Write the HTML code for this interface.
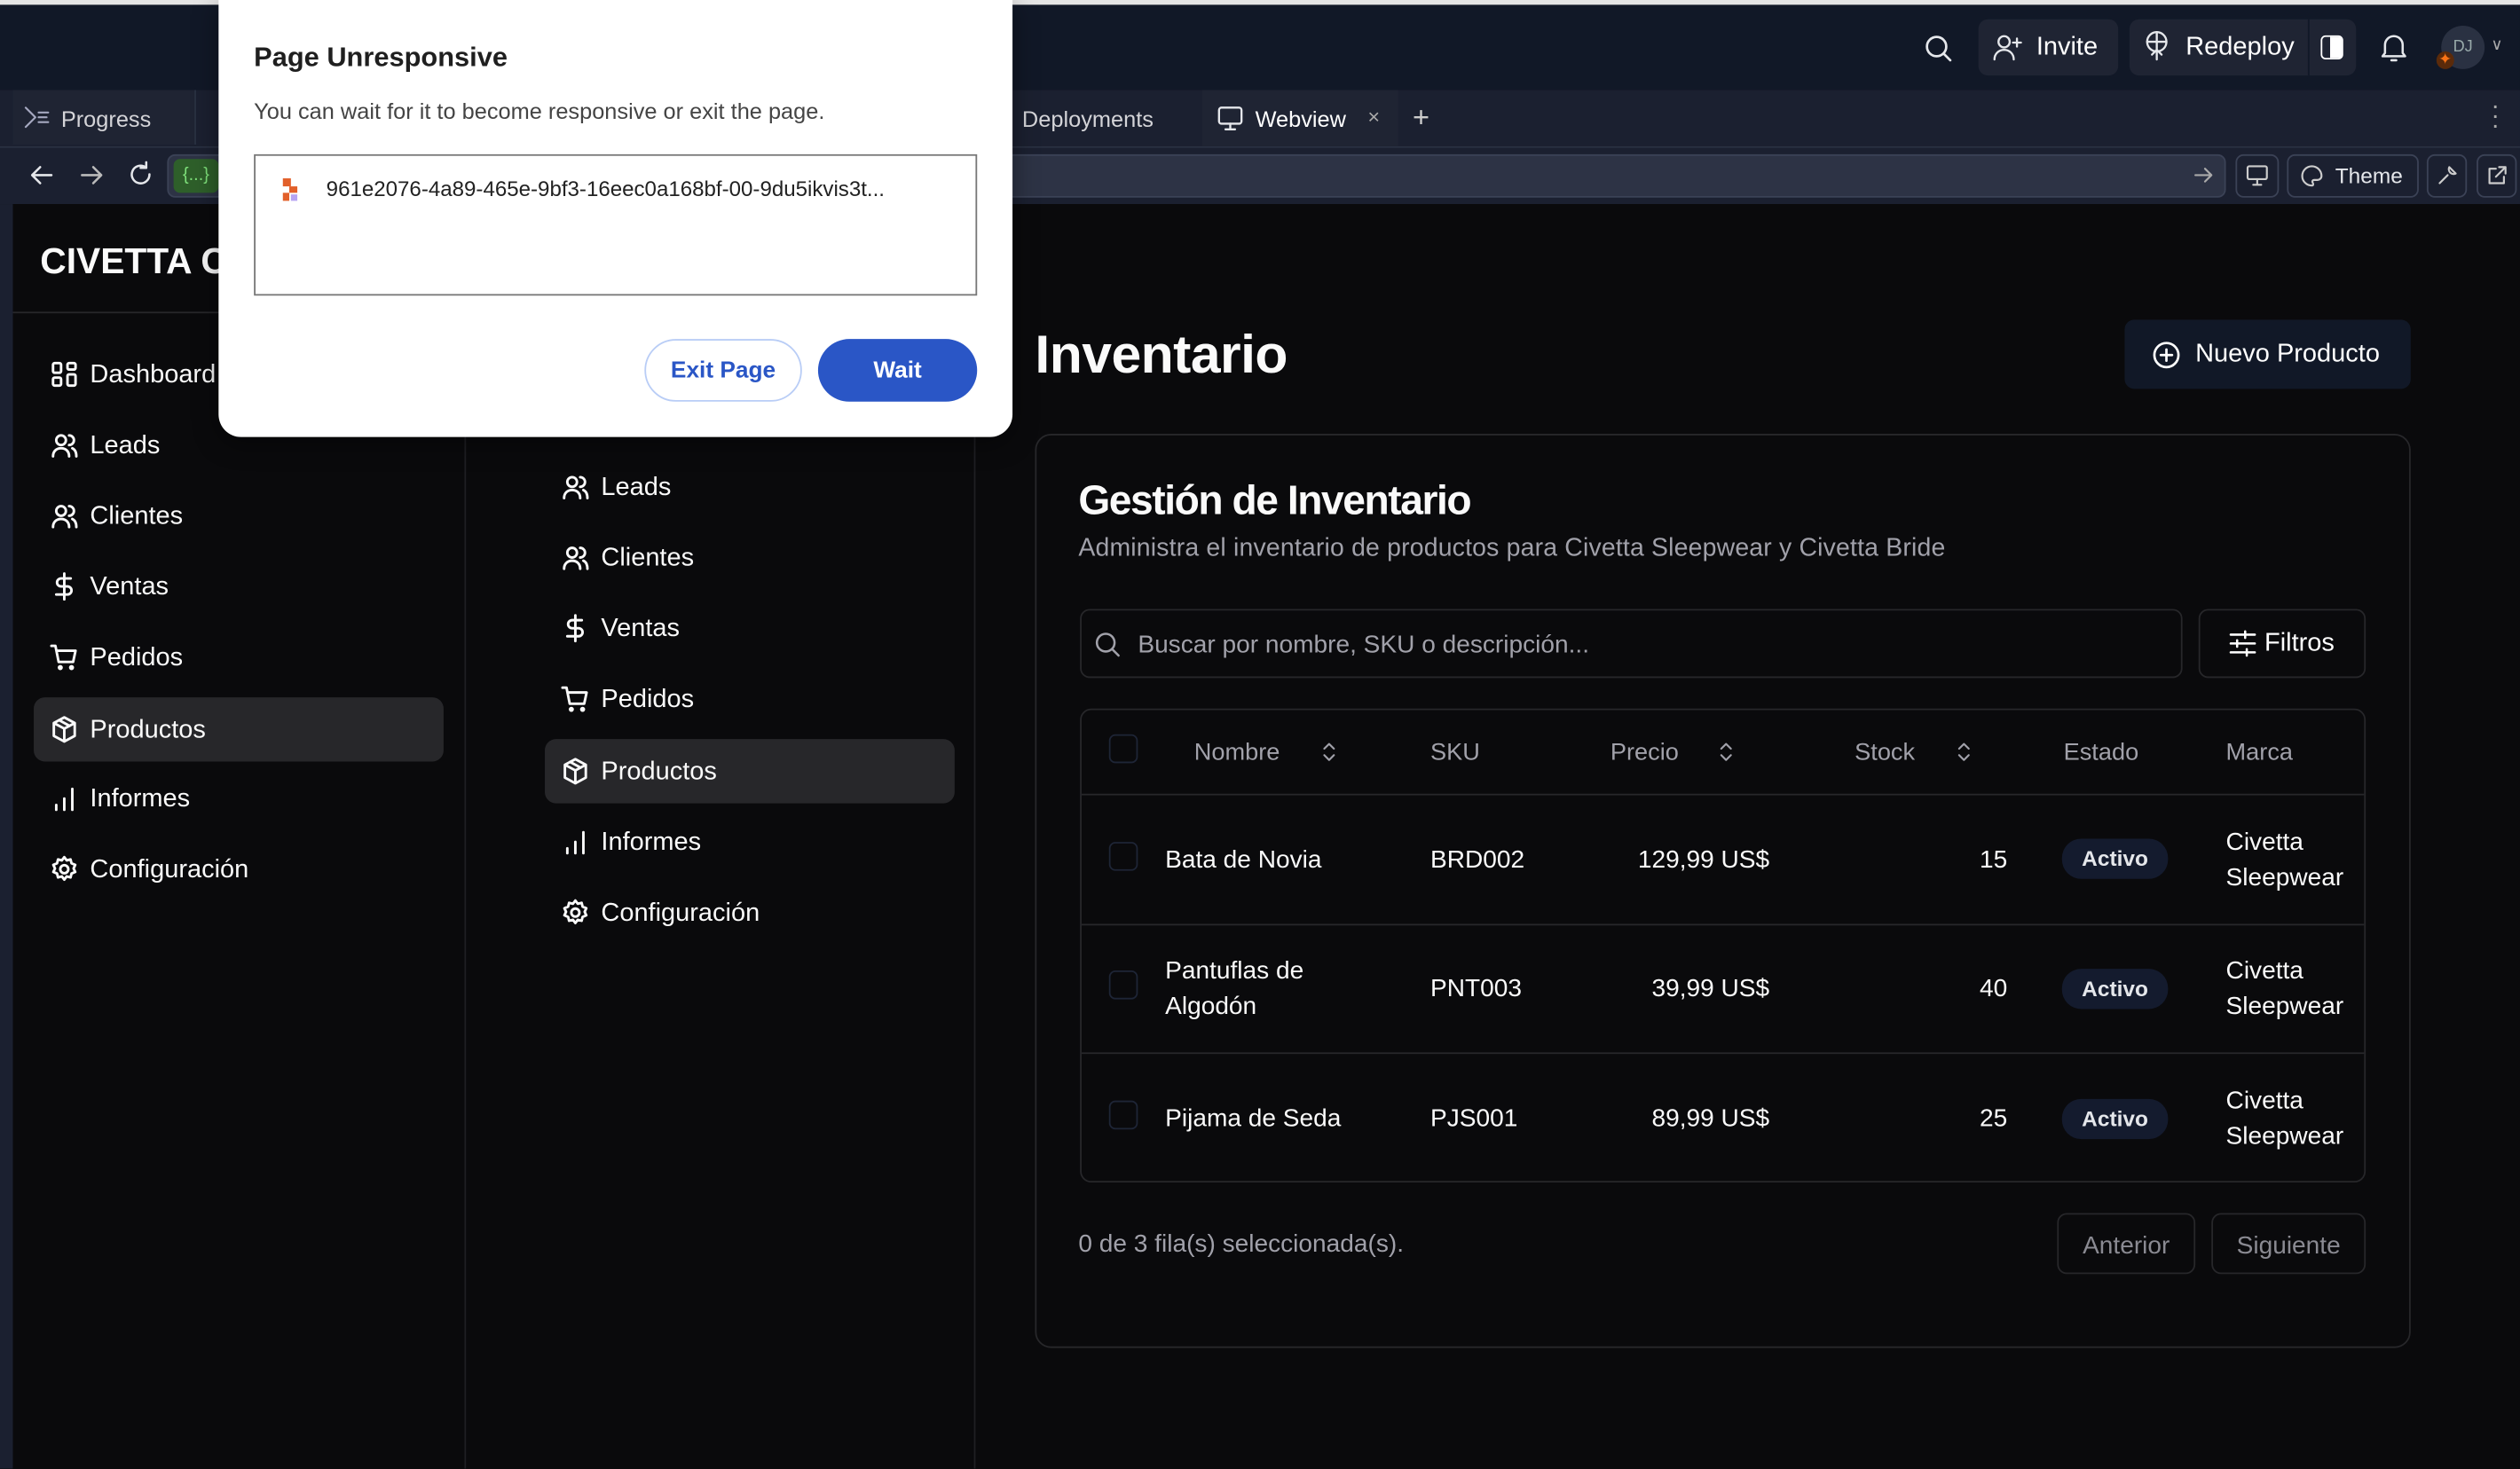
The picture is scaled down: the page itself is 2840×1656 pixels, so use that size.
<!DOCTYPE html>
<html><head><meta charset="utf-8">
<style>
*{box-sizing:border-box;margin:0;padding:0}
html,body{width:2840px;height:1656px;overflow:hidden;background:#0a0a0c}
#s{position:absolute;left:0;top:0;width:1568px;height:914.3px;transform:scale(1.81122);transform-origin:0 0;font-family:"Liberation Sans",sans-serif;color:#fafafa;background:#0a0a0c;overflow:hidden}
.a{position:absolute}
svg{position:absolute;fill:none;stroke:currentColor;stroke-width:1.6;stroke-linecap:round;stroke-linejoin:round}
.nav{position:absolute;font-size:16px;color:#fafafa;height:40px;line-height:42px;padding-left:35px;border-radius:7px}
.nav svg{left:10px;top:11px;width:18px;height:18px}
.act{background:#27272a}
.th{position:absolute;font-size:15px;color:#a1a1aa;top:460px}
.td{position:absolute;font-size:15.5px;color:#fafafa;line-height:22px;margin-top:1px}
.badge{position:absolute;background:#141b2e;border-radius:12px;font-size:13.5px;font-weight:bold;color:#e5e7eb;width:66px;height:25px;line-height:25px;text-align:center;left:1283px}
.cb{position:absolute;left:690px;width:18px;height:18px;border:1px solid #1e2536;border-radius:4px}
.sep{position:absolute;left:673px;width:798px;height:1px;background:#27272a}
</style></head><body><div id="s">
<div class="a" style="left:0;top:0;width:1568px;height:3px;background:#e5e5e5"></div>
<div class="a" style="left:0;top:3px;width:1568px;height:53px;background:#111827"></div>
<div class="a" style="left:0;top:56px;width:1568px;height:35px;background:#1b2030"></div>
<div class="a" style="left:0;top:91px;width:1568px;height:36px;background:#1b2030;border-top:1px solid #2a3142"></div>
<div class="a" style="left:0;top:127px;width:8px;height:790px;background:#1b2030"></div>
<div class="a" style="left:8px;top:56px;width:114px;height:34px;background:#1f2433;border-right:1px solid #2a3142"></div>
<div class="a" style="left:38px;top:66px;font-size:14px;color:#d4d4d8">Progress</div>
<svg style="left:15px;top:66px;width:16px;height:14px;stroke:#a5a8c0;stroke-width:1.2" viewBox="0 0 16 14"><path d="M1 1l6 6-6 6M9 4h6M9 7h5M9 10h6"/></svg>
<div class="a" style="left:636px;top:66px;font-size:14px;color:#d4d4d8">Deployments</div>
<div class="a" style="left:748px;top:56px;width:122px;height:35px;background:#1f2433"></div>
<svg style="left:757px;top:66px;width:17px;height:16px;stroke:#e5e7eb;stroke-width:1.3" viewBox="0 0 17 16"><rect x="1.5" y="1" width="14" height="10" rx="1.5"/><path d="M8.5 11v3M5.5 14.5h6"/></svg>
<div class="a" style="left:781px;top:66px;font-size:14px;color:#fff">Webview</div>
<div class="a" style="left:851px;top:65px;font-size:13px;color:#aaa">×</div>
<div class="a" style="left:879px;top:63px;font-size:18px;color:#ccc">+</div>
<div class="a" style="left:1550px;top:64px;font-size:16px;color:#aaa;line-height:6px">·<br>·<br>·</div>
<svg style="left:18px;top:102px;width:16px;height:14px;stroke:#e5e7eb;stroke-width:1.4" viewBox="0 0 16 14"><path d="M14 7H2M7 2L2 7l5 5"/></svg>
<svg style="left:49px;top:102px;width:16px;height:14px;stroke:#bbb;stroke-width:1.4" viewBox="0 0 16 14"><path d="M2 7h12M9 2l5 5-5 5"/></svg>
<svg style="left:79px;top:100px;width:17px;height:17px;stroke:#e5e7eb;stroke-width:1.4" viewBox="0 0 17 17"><path d="M14 8.5A5.5 5.5 0 1 1 11.5 4M12 1v3.5H8.5"/></svg>
<div class="a" style="left:104px;top:96px;width:1281px;height:27px;background:#2d3345;border:1px solid #3b4256;border-radius:5px"></div>
<div class="a" style="left:108px;top:99px;width:28px;height:21px;background:#2e5f2a;border-radius:4px;color:#7ee07a;font-size:11px;text-align:center;line-height:21px">{...}</div>
<svg style="left:1365px;top:103px;width:12px;height:12px;stroke:#aaa;stroke-width:1.2" viewBox="0 0 12 12"><path d="M1 6h10M7 2l4 4-4 4"/></svg>
<div class="a" style="left:1391px;top:96px;width:27px;height:27px;border:1px solid #3b4256;border-radius:5px"></div>
<svg style="left:1397px;top:102px;width:15px;height:15px;stroke:#ccc;stroke-width:1.2" viewBox="0 0 15 15"><rect x="1.5" y="1.5" width="12" height="8" rx="1"/><path d="M7.5 9.5v3M5 13h5"/></svg>
<div class="a" style="left:1423px;top:96px;width:82px;height:27px;border:1px solid #3b4256;border-radius:5px"></div>
<svg style="left:1431px;top:102px;width:15px;height:15px;stroke:#ccc;stroke-width:1.2" viewBox="0 0 15 15"><path d="M7.5 1.5a6 6 0 1 0 0 12c1 0 1-1 .5-1.8-.5-.8 0-1.7 1-1.7H11a2.5 2.5 0 0 0 2.5-2.5c0-3.3-2.7-6-6-6z"/></svg>
<div class="a" style="left:1453px;top:102px;font-size:13.5px;color:#e5e7eb">Theme</div>
<div class="a" style="left:1510px;top:96px;width:25px;height:27px;border:1px solid #3b4256;border-radius:5px"></div>
<div class="a" style="left:1541px;top:96px;width:25px;height:27px;border:1px solid #3b4256;border-radius:5px"></div>
<svg style="left:1516px;top:102px;width:14px;height:14px;stroke:#ccc;stroke-width:1.2" viewBox="0 0 14 14"><path d="M2 12l5-5M8 2a3 3 0 0 0 4 4l-2-2z"/></svg>
<svg style="left:1547px;top:102px;width:14px;height:14px;stroke:#ccc;stroke-width:1.2" viewBox="0 0 14 14"><path d="M11 8v4H2V3h4M8 2h4v4M12 2L6 8"/></svg>
<svg style="left:1197px;top:21px;width:18px;height:18px;stroke:#e5e7eb;stroke-width:1.5" viewBox="0 0 18 18"><circle cx="8" cy="8" r="6"/><path d="M12.5 12.5l4 4"/></svg>
<div class="a" style="left:1231px;top:12px;width:87px;height:35px;background:#1f2433;border-radius:6px"></div>
<svg style="left:1240px;top:21px;width:19px;height:17px;stroke:#e5e7eb;stroke-width:1.3" viewBox="0 0 19 17"><circle cx="7" cy="5" r="3.5"/><path d="M1 16c0-3.5 2.7-6 6-6s6 2.5 6 6M15 3v5M12.5 5.5h5"/></svg>
<div class="a" style="left:1267px;top:21px;font-size:16px;color:#fff">Invite</div>
<div class="a" style="left:1325px;top:12px;width:141px;height:35px;background:#1f2433;border-radius:6px"></div>
<div class="a" style="left:1436px;top:12px;width:1px;height:35px;background:#111827"></div>
<svg style="left:1333px;top:19px;width:18px;height:19px;stroke:#e5e7eb;stroke-width:1.3" viewBox="0 0 18 19"><circle cx="9" cy="7" r="6"/><path d="M3 7h12M9 1v17M6 15l3-3 3 3"/></svg>
<div class="a" style="left:1360px;top:21px;font-size:16px;color:#fff">Redeploy</div>
<div class="a" style="left:1444px;top:22px;width:14px;height:15px;border:1.5px solid #fff;border-radius:3px;background:linear-gradient(90deg,transparent 40%,#fff 40%)"></div>
<svg style="left:1481px;top:20px;width:17px;height:19px;stroke:#e5e7eb;stroke-width:1.4" viewBox="0 0 17 19"><path d="M3 13V8a5.5 5.5 0 0 1 11 0v5l1.5 2h-14zM7 17.5h3"/></svg>
<div class="a" style="left:1519px;top:16px;width:27px;height:27px;border-radius:50%;background:#2a3142;color:#9aa;font-size:10px;text-align:center;line-height:27px">DJ</div>
<div class="a" style="left:1516px;top:32px;width:11px;height:11px;border-radius:50%;background:#5a2a0a;color:#f97316;font-size:10px;line-height:11px;text-align:center">✦</div>
<div class="a" style="left:1550px;top:23px;font-size:10px;color:#aaa">∨</div>
<div class="a" style="left:8px;top:127px;width:282px;height:790px;background:#0a0a0c;border-right:1px solid #1f1f23"></div>
<div class="a" style="left:8px;top:194px;width:282px;height:1px;background:#27272a"></div>
<div class="a" style="left:25px;top:150px;font-size:22.5px;font-weight:bold">CIVETTA C</div>
<div class="a" style="left:290px;top:127px;width:317px;height:790px;border-right:1px solid #1f1f23"></div>
<div class="nav" style="left:21px;top:213px;width:255px"><svg viewBox="0 0 18 18"><rect x="2" y="2" width="5" height="6" rx="1"/><rect x="11" y="2" width="5" height="4" rx="1"/><rect x="11" y="9" width="5" height="7" rx="1"/><rect x="2" y="11" width="5" height="5" rx="1"/></svg>Dashboard</div>
<div class="nav" style="left:21px;top:257px;width:255px"><svg viewBox="0 0 18 18"><circle cx="7" cy="6" r="3"/><path d="M2 16c0-3 2-5 5-5s5 2 5 5M12 3a3 3 0 0 1 0 6M14 11c1.5.7 2.5 2.5 2.5 5"/></svg>Leads</div>
<div class="nav" style="left:21px;top:301px;width:255px"><svg viewBox="0 0 18 18"><circle cx="7" cy="6" r="3"/><path d="M2 16c0-3 2-5 5-5s5 2 5 5M12 3a3 3 0 0 1 0 6M14 11c1.5.7 2.5 2.5 2.5 5"/></svg>Clientes</div>
<div class="nav" style="left:21px;top:345px;width:255px"><svg viewBox="0 0 18 18"><path d="M9 1v16M13 4H7a2.5 2.5 0 0 0 0 5h4a2.5 2.5 0 0 1 0 5H4"/></svg>Ventas</div>
<div class="nav" style="left:21px;top:389px;width:255px"><svg viewBox="0 0 18 18"><path d="M1 2h2.5l2 10h9l1.5-7H4.5"/><circle cx="6.5" cy="15.5" r=".8"/><circle cx="13.5" cy="15.5" r=".8"/></svg>Pedidos</div>
<div class="nav act" style="left:21px;top:434px;width:255px"><svg viewBox="0 0 18 18"><path d="M9 1.5l6.5 3.5v8L9 16.5 2.5 13V5zM2.5 5L9 8.5 15.5 5M9 8.5v8M5.7 3.2l6.6 3.6"/></svg>Productos</div>
<div class="nav" style="left:21px;top:477px;width:255px"><svg viewBox="0 0 18 18"><path d="M4 16v-3M9 16V9M14 16V3"/></svg>Informes</div>
<div class="nav" style="left:21px;top:521px;width:255px"><svg viewBox="0 0 18 18"><circle cx="9" cy="9" r="2.5"/><path d="M9 1.5l1.5 2 2.4-.6.6 2.4 2.3 1-1 2.2 1 2.2-2.3 1-.6 2.4-2.4-.6-1.5 2-1.5-2-2.4.6-.6-2.4-2.3-1 1-2.2-1-2.2 2.3-1 .6-2.4 2.4.6z"/></svg>Configuración</div>
<div class="nav" style="left:339px;top:283px;width:255px"><svg viewBox="0 0 18 18"><circle cx="7" cy="6" r="3"/><path d="M2 16c0-3 2-5 5-5s5 2 5 5M12 3a3 3 0 0 1 0 6M14 11c1.5.7 2.5 2.5 2.5 5"/></svg>Leads</div>
<div class="nav" style="left:339px;top:327px;width:255px"><svg viewBox="0 0 18 18"><circle cx="7" cy="6" r="3"/><path d="M2 16c0-3 2-5 5-5s5 2 5 5M12 3a3 3 0 0 1 0 6M14 11c1.5.7 2.5 2.5 2.5 5"/></svg>Clientes</div>
<div class="nav" style="left:339px;top:371px;width:255px"><svg viewBox="0 0 18 18"><path d="M9 1v16M13 4H7a2.5 2.5 0 0 0 0 5h4a2.5 2.5 0 0 1 0 5H4"/></svg>Ventas</div>
<div class="nav" style="left:339px;top:415px;width:255px"><svg viewBox="0 0 18 18"><path d="M1 2h2.5l2 10h9l1.5-7H4.5"/><circle cx="6.5" cy="15.5" r=".8"/><circle cx="13.5" cy="15.5" r=".8"/></svg>Pedidos</div>
<div class="nav act" style="left:339px;top:460px;width:255px"><svg viewBox="0 0 18 18"><path d="M9 1.5l6.5 3.5v8L9 16.5 2.5 13V5zM2.5 5L9 8.5 15.5 5M9 8.5v8M5.7 3.2l6.6 3.6"/></svg>Productos</div>
<div class="nav" style="left:339px;top:504px;width:255px"><svg viewBox="0 0 18 18"><path d="M4 16v-3M9 16V9M14 16V3"/></svg>Informes</div>
<div class="nav" style="left:339px;top:548px;width:255px"><svg viewBox="0 0 18 18"><circle cx="9" cy="9" r="2.5"/><path d="M9 1.5l1.5 2 2.4-.6.6 2.4 2.3 1-1 2.2 1 2.2-2.3 1-.6 2.4-2.4-.6-1.5 2-1.5-2-2.4.6-.6-2.4-2.3-1 1-2.2-1-2.2 2.3-1 .6-2.4 2.4.6z"/></svg>Configuración</div>
<div class="a" style="left:644px;top:203px;font-size:33.5px;font-weight:bold;letter-spacing:-0.3px">Inventario</div>
<div class="a" style="left:1322px;top:199px;width:178px;height:43px;background:#111827;border-radius:6px"></div>
<svg style="left:1339px;top:212px;width:18px;height:18px;stroke:#fff;stroke-width:1.5" viewBox="0 0 18 18"><circle cx="9" cy="9" r="7.5"/><path d="M9 5.5v7M5.5 9h7"/></svg>
<div class="a" style="left:1366px;top:212px;font-size:16px;color:#fff">Nuevo Producto</div>
<div class="a" style="left:644px;top:270px;width:856px;height:569px;border:1px solid #27272a;border-radius:10px"></div>
<div class="a" style="left:671px;top:298px;font-size:25.5px;font-weight:bold;letter-spacing:-0.8px">Gestión de Inventario</div>
<div class="a" style="left:671px;top:333px;font-size:15.7px;color:#a1a1aa;letter-spacing:0.1px">Administra el inventario de productos para Civetta Sleepwear y Civetta Bride</div>
<div class="a" style="left:672px;top:379px;width:686px;height:43px;border:1px solid #27272a;border-radius:6px"></div>
<svg style="left:681px;top:393px;width:16px;height:16px;stroke:#a1a1aa;stroke-width:1.4" viewBox="0 0 16 16"><circle cx="7" cy="7" r="5.5"/><path d="M11 11l4 4"/></svg>
<div class="a" style="left:708px;top:393px;font-size:15.5px;color:#a1a1aa">Buscar por nombre, SKU o descripción...</div>
<div class="a" style="left:1368px;top:379px;width:104px;height:43px;border:1px solid #27272a;border-radius:6px"></div>
<svg style="left:1387px;top:392px;width:17px;height:17px;stroke:#fff;stroke-width:1.4" viewBox="0 0 17 17"><path d="M1 3h15M1 8.5h15M1 14h15M10 1v4M5 6.5v4M11 12v4"/></svg>
<div class="a" style="left:1409px;top:392px;font-size:16px;color:#fff">Filtros</div>
<div class="a" style="left:672px;top:441px;width:800px;height:295px;border:1px solid #27272a;border-radius:7px"></div>
<div class="cb" style="top:457px"></div>
<div class="th" style="left:743px">Nombre</div>
<svg style="left:822px;top:461px;width:10px;height:14px;stroke:#a1a1aa;stroke-width:1.2" viewBox="0 0 10 14"><path d="M2 5l3-3 3 3M2 9l3 3 3-3"/></svg>
<div class="th" style="left:890px">SKU</div>
<div class="th" style="left:1002px">Precio</div>
<svg style="left:1069px;top:461px;width:10px;height:14px;stroke:#a1a1aa;stroke-width:1.2" viewBox="0 0 10 14"><path d="M2 5l3-3 3 3M2 9l3 3 3-3"/></svg>
<div class="th" style="left:1154px">Stock</div>
<svg style="left:1217px;top:461px;width:10px;height:14px;stroke:#a1a1aa;stroke-width:1.2" viewBox="0 0 10 14"><path d="M2 5l3-3 3 3M2 9l3 3 3-3"/></svg>
<div class="th" style="left:1284px">Estado</div>
<div class="th" style="left:1385px">Marca</div>
<div class="sep" style="top:494px"></div>
<div class="sep" style="top:575px"></div>
<div class="sep" style="top:655px"></div>
<div class="cb" style="top:524px"></div>
<div class="td" style="left:725px;top:524px">Bata de Novia</div>
<div class="td" style="left:890px;top:524px">BRD002</div>
<div class="td" style="left:1000px;top:524px;width:101px;text-align:right">129,99 US$</div>
<div class="td" style="left:1200px;top:524px;width:49px;text-align:right">15</div>
<div class="badge" style="top:522px">Activo</div>
<div class="td" style="left:1385px;top:513px">Civetta<br>Sleepwear</div>
<div class="cb" style="top:604px"></div>
<div class="td" style="left:725px;top:593px">Pantuflas de<br>Algodón</div>
<div class="td" style="left:890px;top:604px">PNT003</div>
<div class="td" style="left:1000px;top:604px;width:101px;text-align:right">39,99 US$</div>
<div class="td" style="left:1200px;top:604px;width:49px;text-align:right">40</div>
<div class="badge" style="top:603px">Activo</div>
<div class="td" style="left:1385px;top:593px">Civetta<br>Sleepwear</div>
<div class="cb" style="top:685px"></div>
<div class="td" style="left:725px;top:685px">Pijama de Seda</div>
<div class="td" style="left:890px;top:685px">PJS001</div>
<div class="td" style="left:1000px;top:685px;width:101px;text-align:right">89,99 US$</div>
<div class="td" style="left:1200px;top:685px;width:49px;text-align:right">25</div>
<div class="badge" style="top:684px">Activo</div>
<div class="td" style="left:1385px;top:674px">Civetta<br>Sleepwear</div>
<div class="a" style="left:671px;top:766px;font-size:15.5px;color:#a1a1aa">0 de 3 fila(s) seleccionada(s).</div>
<div class="a" style="left:1280px;top:755px;width:86px;height:38px;border:1px solid #27272a;border-radius:6px;color:#8a8a92;font-size:15.5px;text-align:center;line-height:40px">Anterior</div>
<div class="a" style="left:1376px;top:755px;width:96px;height:38px;border:1px solid #27272a;border-radius:6px;color:#8a8a92;font-size:15.5px;text-align:center;line-height:40px">Siguiente</div>
<div class="a" style="left:136px;top:0;width:494px;height:272px;background:#fff;border-radius:0 0 14px 14px;box-shadow:0 4px 16px rgba(0,0,0,.4)"></div>
<div class="a" style="left:158px;top:26px;font-size:17px;font-weight:bold;color:#1f1f1f">Page Unresponsive</div>
<div class="a" style="left:158px;top:61px;font-size:14px;color:#444">You can wait for it to become responsive or exit the page.</div>
<div class="a" style="left:158px;top:96px;width:450px;height:88px;border:1px solid #777"></div>
<div class="a" style="left:176px;top:111px;width:5px;height:5px;background:#e2602a"></div>
<div class="a" style="left:180px;top:116px;width:5px;height:4px;background:#e2602a"></div>
<div class="a" style="left:176px;top:120px;width:4px;height:5px;background:#e2602a"></div>
<div class="a" style="left:181px;top:121px;width:4px;height:4px;background:#b6a4f3"></div>
<div class="a" style="left:203px;top:110px;font-size:13.3px;color:#222">961e2076-4a89-465e-9bf3-16eec0a168bf-00-9du5ikvis3t...</div>
<div class="a" style="left:401px;top:211px;width:98px;height:39px;border:1px solid #b9cdf6;border-radius:20px;color:#2a56c6;font-size:14.5px;font-weight:bold;text-align:center;line-height:39px">Exit Page</div>
<div class="a" style="left:509px;top:211px;width:99px;height:39px;background:#2a56c6;border-radius:20px;color:#fff;font-size:14.5px;font-weight:bold;text-align:center;line-height:40px">Wait</div>
</div></body></html>
